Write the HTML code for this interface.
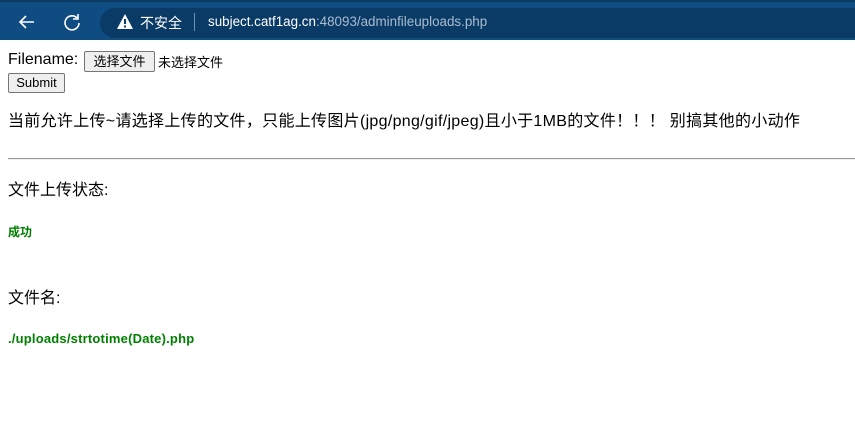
<!DOCTYPE html>
<html><head><meta charset="utf-8"><style>
body{margin:0;width:855px;height:422px;background:#fff;overflow:hidden;font-family:"Liberation Sans","Noto Sans CJK SC",sans-serif;position:relative}
.bar{position:absolute;left:0;top:0;width:855px;height:40px;background:#0f4c81;border-top:2px solid #0a3a63;box-sizing:border-box}
.pill{position:absolute;left:100px;top:6px;width:770px;height:30px;border-radius:15px;background:#0a3b66}
.t{position:absolute;white-space:nowrap}
.btn{position:absolute;border:1px solid #767676;background:#efefef;border-radius:2px;font-size:13px;box-sizing:border-box;text-align:center}
</style></head><body>
<div class="bar">
<svg style="position:absolute;left:17px;top:10px" width="20" height="20" viewBox="0 0 20 20"><path d="M17 10H3M9 4L3 10L9 16" stroke="#fff" stroke-width="1.6" fill="none"/></svg>
<svg style="position:absolute;left:62px;top:10px" width="20" height="20" viewBox="0 0 20 20"><path d="M15.5 6.5A7 7 0 1 0 17 11" stroke="#fff" stroke-width="1.6" fill="none"/><path d="M16 2v5h-5" stroke="#fff" stroke-width="1.6" fill="none"/></svg>
<div class="pill"></div>
<svg style="position:absolute;left:116px;top:11px" width="18" height="17" viewBox="0 0 18 17"><path d="M9 1L17 16H1Z" fill="#fff"/><rect x="8" y="6" width="2" height="5" fill="#0a3b66"/><rect x="8" y="12.5" width="2" height="2" fill="#0a3b66"/></svg>
<span class="t" style="left:140px;top:11px;color:#fff;font-size:14px">不安全</span>
<div style="position:absolute;left:194px;top:11px;width:1px;height:18px;background:#6f8fb0"></div>
<span class="t" style="left:208px;top:12px;color:#fff;font-size:13.4px">subject.catf1ag.cn<span style="color:#a9bcd0">:48093/adminfileuploads.php</span></span>
</div>
<span class="t" style="left:8px;top:51px;font-size:16px">Filename:</span>
<div class="btn" style="left:84px;top:51px;width:71px;height:21px;line-height:19px">选择文件</div>
<span class="t" style="left:158px;top:52px;font-size:13px">未选择文件</span>
<div class="btn" style="left:8px;top:73px;width:57px;height:20px;line-height:18px">Submit</div>
<span class="t" style="left:8px;top:107px;font-size:16px;letter-spacing:0.3px">当前允许上传~请选择上传的文件，只能上传图片(jpg/png/gif/jpeg)且小于1MB的文件！！！ 别搞其他的小动作</span>
<div style="position:absolute;left:8px;top:158px;width:847px;height:1px;background:#9a9a9a;border-bottom:1px solid #eee"></div>
<span class="t" style="left:8px;top:176px;font-size:16px">文件上传状态:</span>
<span class="t" style="left:8px;top:223px;font-size:12px;font-weight:bold;color:#008000">成功</span>
<span class="t" style="left:8px;top:284px;font-size:16px">文件名:</span>
<span class="t" style="left:8px;top:331px;font-size:13px;font-weight:bold;color:#008000;letter-spacing:0.2px">./uploads/strtotime(Date).php</span>
</body></html>
